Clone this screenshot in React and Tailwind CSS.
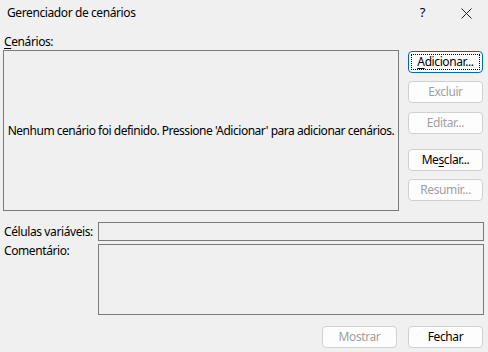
import React from 'react';

const font = { fontFamily: '"Noto Sans", "Open Sans", sans-serif' };

const DialogButton = ({ children, disabled = false, focused = false, className = '' }) => (
    <button
        type="button"
        disabled={disabled}
        className={`flex h-[22px] w-[75px] shrink-0 items-center justify-center rounded-[4px] border bg-[#fdfdfd] text-[12px] leading-none ${
            focused ? 'border-[#0067c0] p-[2px]' : 'border-[#d0d0d0]'
        } ${disabled ? 'text-[#a0a0a0]' : 'text-black'} ${className}`}
    >
        {focused ? (
            <span className="flex h-full w-full items-center justify-center border border-dotted border-black">
                {children}
            </span>
        ) : (
            children
        )}
    </button>
);

export default function App() {
    return (
        <div
            className="flex h-[352px] w-[488px] flex-col overflow-hidden whitespace-nowrap bg-[#f0f0f0] text-[12px] tracking-[-0.4px] text-black"
            style={font}
        >
            {/* Title bar */}
            <div className="flex h-[26px] shrink-0 items-center pl-[7px]">
                <span className="flex-1 text-[12px]">Gerenciador de cenários</span>
                <span className="mr-[36px] text-[13px]">?</span>
                <svg className="mr-[16px]" width="11" height="11" viewBox="0 0 11 11">
                    <path d="M0.5 0.5 L10.5 10.5 M10.5 0.5 L0.5 10.5" stroke="#222" strokeWidth="1" />
                </svg>
            </div>

            {/* Scenario list */}
            <div className="mt-[8px] shrink-0 pl-[4px] leading-[16px]">
                <span className="underline underline-offset-2">C</span>enários:
            </div>
            <div className="flex shrink-0 pl-[3px]">
                <div className="flex h-[161px] w-[396px] items-center justify-center border border-[#7a7a7a] text-[12px] tracking-[-0.48px]">
                    Nenhum cenário foi definido. Pressione 'Adicionar' para adicionar cenários.
                </div>
                <div className="ml-[9px] flex flex-col pt-[1px]">
                    <DialogButton focused>
                        <span>
                            <span className="underline underline-offset-2">A</span>dicionar...
                        </span>
                    </DialogButton>
                    <DialogButton disabled className="mt-[8px]">Excluir</DialogButton>
                    <DialogButton disabled className="mt-[9px]">Editar...</DialogButton>
                    <DialogButton className="mt-[15px]">
                        <span>
                            Me<span className="underline underline-offset-2">s</span>clar...
                        </span>
                    </DialogButton>
                    <DialogButton disabled className="mt-[8px]">Resumir...</DialogButton>
                </div>
            </div>

            {/* Changing cells */}
            <div className="mt-[11px] flex shrink-0 items-center pl-[4px]">
                <span className="w-[94px]">Células variáveis:</span>
                <div className="h-[19px] w-[386px] border border-[#7a7a7a]" />
            </div>

            {/* Comment */}
            <div className="mt-[3px] flex shrink-0 pl-[4px]">
                <span className="w-[94px] leading-[14px]">Comentário:</span>
                <div className="h-[71px] w-[386px] border border-[#7a7a7a]" />
            </div>

            {/* Footer */}
            <div className="mt-[11px] flex shrink-0 justify-end gap-[11px] pr-[5px]">
                <DialogButton disabled className="w-[74px]">Mostrar</DialogButton>
                <DialogButton className="w-[74px]">Fechar</DialogButton>
            </div>
        </div>
    );
}
